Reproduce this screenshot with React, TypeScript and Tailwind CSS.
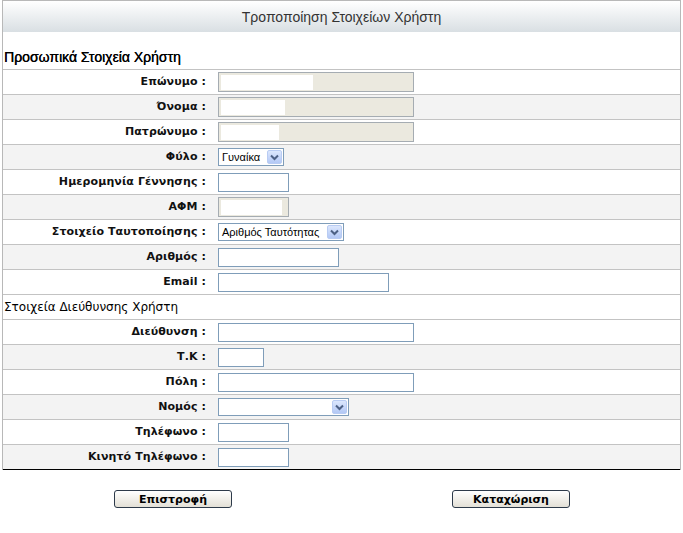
import React from "react"

type Field = {
  label: string
  kind: "text" | "disabled" | "select"
  width: number
  value?: string
  redact?: number
}

const personal: Field[] = [
  { label: "Επώνυμο :", kind: "disabled", width: 196, redact: 92 },
  { label: "Όνομα :", kind: "disabled", width: 196, redact: 64 },
  { label: "Πατρώνυμο :", kind: "disabled", width: 196, redact: 58 },
  { label: "Φύλο :", kind: "select", width: 66, value: "Γυναίκα" },
  { label: "Ημερομηνία Γέννησης :", kind: "text", width: 71 },
  { label: "ΑΦΜ :", kind: "disabled", width: 71, redact: 61 },
  { label: "Στοιχείο Ταυτοποίησης :", kind: "select", width: 126, value: "Αριθμός Ταυτότητας" },
  { label: "Αριθμός :", kind: "text", width: 121 },
  { label: "Email :", kind: "text", width: 171 },
]

const address: Field[] = [
  { label: "Διεύθυνση :", kind: "text", width: 196 },
  { label: "Τ.Κ :", kind: "text", width: 46 },
  { label: "Πόλη :", kind: "text", width: 196 },
  { label: "Νομός :", kind: "select", width: 131, value: "" },
  { label: "Τηλέφωνο :", kind: "text", width: 71 },
  { label: "Κινητό Τηλέφωνο :", kind: "text", width: 71 },
]

function Chevron() {
  return (
    <svg width="9" height="7" viewBox="0 0 9 7">
      <path d="M1 1.5 L4.5 5 L8 1.5" fill="none" stroke="#4d6185" strokeWidth="2" />
    </svg>
  )
}

function Control({ f }: { f: Field }) {
  if (f.kind === "select") {
    return (
      <div
        className="h-[18px] border border-[#7f9db9] bg-white flex items-center justify-between pl-[3px] pr-[1px] text-[11px] text-black"
        style={{ width: f.width }}
      >
        <span className="font-['Liberation_Sans',sans-serif] leading-none">{f.value}</span>
        <span className="w-[15px] h-[14px] rounded-[2px] border border-[#b9ccf3] bg-gradient-to-b from-[#dce7fd] to-[#b3c8f5] flex items-center justify-center">
          <Chevron />
        </span>
      </div>
    )
  }
  const disabled = f.kind === "disabled"
  return (
    <div
      className={
        disabled
          ? "h-[20px] border border-[#a5acb2] bg-[#ebe9df] flex items-center pl-[2px]"
          : "h-[19px] border border-[#7f9db9] bg-white"
      }
      style={{ width: f.width }}
    >
      {disabled && f.redact ? <div className="h-[15px] bg-white" style={{ width: f.redact }} /> : null}
    </div>
  )
}

function Row({ f, shade, last }: { f: Field; shade: boolean; last?: boolean }) {
  return (
    <div
      className={
        "h-[25px] flex items-center border-b " +
        (last ? "border-b-black " : "border-b-[#c3c3c3] ") +
        (shade ? "bg-[#f3f3f3]" : "bg-white")
      }
    >
      <div className="w-[203px] pt-[1px] text-right text-[11px] font-bold text-[#111] font-['DejaVu_Sans',Verdana,sans-serif] tracking-[0.1px]">
        {f.label}
      </div>
      <div className="ml-[12px]">
        <Control f={f} />
      </div>
    </div>
  )
}

export default function App() {
  return (
    <div className="w-[683px] h-[533px] bg-white overflow-hidden">
      <div className="ml-[2px] w-[679px] border-x border-t border-[#b8b8b8]">
        <div className="h-[31px] pt-[1px] bg-gradient-to-b from-white to-[#d9dfe3] flex items-center justify-center text-[14px] text-[#333] font-['Liberation_Sans',Arial,sans-serif]">
          Τροποποίηση Στοιχείων Χρήστη
        </div>
        <div className="h-[13px]" />
        <div className="h-[25px] flex items-center pl-[1px] border-b border-b-[#c3c3c3] text-[14px] text-black font-['Liberation_Sans',Arial,sans-serif] [text-shadow:0.3px_0_0_#000]">
          Προσωπικά Στοιχεία Χρήστη
        </div>
        {personal.map((f, i) => (
          <Row key={f.label} f={f} shade={i % 2 === 1} />
        ))}
        <div className="h-[25px] flex items-center pl-[1px] border-b border-b-[#c3c3c3] text-[12px] text-black font-['DejaVu_Sans',Verdana,sans-serif]">
          Στοιχεία Διεύθυνσης Χρήστη
        </div>
        {address.map((f, i) => (
          <Row key={f.label} f={f} shade={i % 2 === 1} last={i === address.length - 1} />
        ))}
      </div>
      <div className="flex mt-[20px]">
        <button className="ml-[114px] w-[118px] h-[18px] rounded-[3px] border border-[#2d3a4a] bg-gradient-to-b from-white to-[#e3e0d6] text-[11px] font-bold text-black font-['DejaVu_Sans',Verdana,sans-serif] leading-none">
          Επιστροφή
        </button>
        <button className="ml-[220px] w-[118px] h-[18px] rounded-[3px] border border-[#2d3a4a] bg-gradient-to-b from-white to-[#e3e0d6] text-[11px] font-bold text-black font-['DejaVu_Sans',Verdana,sans-serif] leading-none">
          Καταχώριση
        </button>
      </div>
    </div>
  )
}
